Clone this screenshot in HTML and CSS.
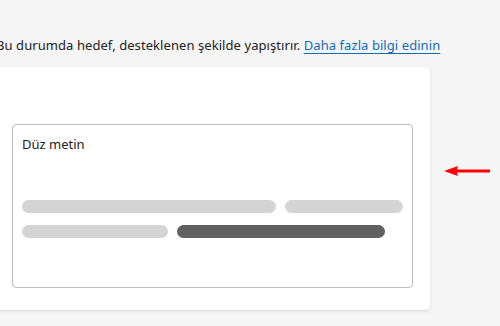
FILE: index.html
```html
<!DOCTYPE html>
<html lang="tr">
<head>
    <meta charset="UTF-8">
    <title>Düz metin</title>
    <link rel="stylesheet" href="styles.css">
</head>
<body>
    <p class="intro">Bu durumda hedef, desteklenen şekilde yapıştırır. <a href="#">Daha fazla bilgi edinin</a></p>

    <div class="card">
        <div class="preview">
            <p class="preview-title">Düz metin</p>
            <div class="lines">
                <div class="row">
                    <span class="bar" style="width: 254px"></span>
                    <span class="bar" style="width: 118px"></span>
                </div>
                <div class="row">
                    <span class="bar" style="width: 146px"></span>
                    <span class="bar dark" style="width: 208px"></span>
                </div>
            </div>
        </div>
    </div>

    <svg class="arrow" width="50" height="12" viewBox="0 0 50 12">
        <path d="M0 6 L14 1 L13 4.5 L46 4.5 L46 7.5 L13 7.5 L14 11 Z" fill="#f00"/>
    </svg>
</body>
</html>
```

FILE: styles.css
```css
body {
    margin: 0;
    background-color: #f5f5f5;
    font-family: 'Noto Sans', 'Open Sans', sans-serif;
    color: #222;
    position: relative;
    height: 326px;
    overflow: hidden;
}

.intro {
    margin: 0;
    padding-top: 35px;
    margin-left: -4px;
    font-size: 13px;
    line-height: 20px;
    letter-spacing: 0.07px;
    white-space: nowrap;
}

.intro a {
    color: #0f6cbd;
    text-decoration: underline;
    text-underline-offset: 3px;
}

.card {
    margin-top: 12px;
    margin-left: -10px;
    width: 440px;
    box-sizing: border-box;
    background: #fff;
    border-radius: 4px;
    box-shadow: 0 1px 3px rgba(0, 0, 0, 0.13);
    padding: 57px 17px 22px 22px;
}

.preview {
    height: 164px;
    box-sizing: border-box;
    border: 1px solid #bdbdbd;
    border-radius: 4px;
    padding: 9px 9px;
}

.preview-title {
    margin: 0;
    font-size: 13px;
    line-height: 20px;
}

.lines {
    margin-top: 46px;
    display: flex;
    flex-direction: column;
    gap: 12px;
}

.row {
    display: flex;
    gap: 9px;
}

.bar {
    height: 13px;
    border-radius: 7px;
    background: #d4d4d4;
}

.bar.dark {
    background: #616161;
}

.arrow {
    position: absolute;
    left: 444px;
    top: 165px;
}
```
